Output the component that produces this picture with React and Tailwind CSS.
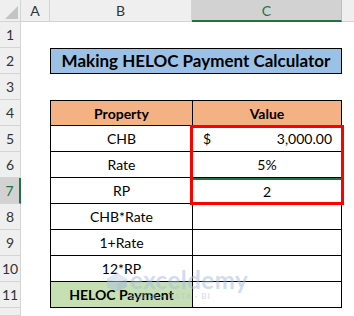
import React from 'react';

const ROW_NUMS = [1, 2, 3, 4, 5, 6, 7, 8, 9, 10, 11, 12];

function RowHeader({ n }) {
  const selected = n === 7;
  return (
    <div
      className={
        'col-start-1 flex items-center justify-center border-b border-r border-[#d4d4d4] text-[14px] ' +
        (selected
          ? 'border-r-2 border-r-[#217346] bg-[#d2d2d2] text-[#217346]'
          : 'bg-[#efefef] text-[#333]')
      }
      style={{ gridRowStart: n + 1 }}
    >
      {n < 12 ? n : null}
    </div>
  );
}

function Cell({ row, col, children, className = 'justify-center' }) {
  return (
    <div
      className={'flex items-center border-b border-black text-[14px] text-black ' + className}
      style={{ gridRowStart: row + 1, gridColumnStart: col }}
    >
      {children}
    </div>
  );
}

export default function App() {
  return (
    <div className="h-[316px] w-[354px] overflow-hidden bg-white font-['Lato',sans-serif]">
      <div className="grid h-full grid-cols-[21px_29px_142px_150px_1fr] grid-rows-[22px_repeat(11,26px)_1fr]">
        {/* corner */}
        <div className="col-start-1 row-start-1 flex items-end justify-end border-b border-r border-[#d4d4d4] bg-[#efefef] p-[2px]">
          <div className="h-0 w-0 border-b-[13px] border-l-[13px] border-b-[#c4c4c4] border-l-transparent" />
        </div>
        <div className="col-start-2 row-start-1 flex items-center justify-center border-b border-r border-[#d4d4d4] bg-[#efefef] text-[14px] text-[#333]">
          A
        </div>
        <div className="col-start-3 row-start-1 flex items-center justify-center border-b border-r border-[#d4d4d4] bg-[#efefef] text-[14px] text-[#333]">
          B
        </div>
        <div className="col-start-4 row-start-1 flex items-center justify-center border-b-2 border-r border-b-[#217346] border-r-[#bdbdbd] bg-[#d2d2d2] text-[14px] text-[#217346]">
          C
        </div>
        <div className="col-start-5 row-start-1 border-b border-[#d4d4d4] bg-[#efefef]" />

        {ROW_NUMS.map((n) => (
          <RowHeader key={n} n={n} />
        ))}

        {/* title */}
        <div className="col-start-3 col-span-2 row-start-3 flex items-center justify-center border border-black bg-[#9bc2e6] text-[17px] font-bold text-black">
          Making HELOC Payment Calculator
        </div>

        {/* table header */}
        <Cell row={4} col={3} className="justify-center border-l border-t bg-[#f4b183] font-bold">
          Property
        </Cell>
        <Cell row={4} col={4} className="justify-center border-l border-r border-t bg-[#f4b183] font-bold">
          Value
        </Cell>

        <Cell row={5} col={3} className="justify-center border-l">CHB</Cell>
        <Cell row={5} col={4} className="justify-between border-l border-r pl-[10px] pr-[9px]">
          <span>$</span>
          <span>3,000.00</span>
        </Cell>

        <Cell row={6} col={3} className="justify-center border-l">Rate</Cell>
        <Cell row={6} col={4} className="justify-center border-l border-r">5%</Cell>

        <Cell row={7} col={3} className="justify-center border-l">RP</Cell>
        <Cell row={7} col={4} className="justify-center border-l border-r">
          <div className="flex h-full w-full items-center justify-center border-t-2 border-[#217346]">2</div>
        </Cell>

        <Cell row={8} col={3} className="justify-center border-l">CHB*Rate</Cell>
        <Cell row={8} col={4} className="border-l border-r" />

        <Cell row={9} col={3} className="justify-center border-l">1+Rate</Cell>
        <Cell row={9} col={4} className="border-l border-r" />

        <Cell row={10} col={3} className="justify-center border-l">12*RP</Cell>
        <Cell row={10} col={4} className="border-l border-r" />

        <Cell row={11} col={3} className="justify-center border-l bg-[#c6e0b4] font-bold">
          HELOC Payment
        </Cell>
        <Cell row={11} col={4} className="border-l border-r" />

        {/* red highlight over C5:C7 */}
        <div className="pointer-events-none z-10 col-start-4 row-start-6 row-span-3 -mb-[1px] -ml-[2px] -mr-[2px] -mt-[1px] border-[3px] border-[#ff0000]" />

        {/* watermark */}
        <div className="pointer-events-none z-10 col-start-3 col-span-2 row-start-11 row-span-2 flex items-start pl-[56px] pt-[15px] opacity-50">
          <svg width="22" height="20" viewBox="0 0 22 20" className="mt-[1px]">
            <path d="M11 1 L21 7 L21 15 L11 19 L1 15 L1 7 Z" fill="#9fb8dc" />
            <path d="M11 1 L21 7 L11 11 L1 7 Z" fill="#c4d4ec" />
            <path d="M11 11 L11 19 L1 15 L1 7 Z" fill="#aec4e4" />
          </svg>
          <div className="ml-[2px] flex flex-col leading-none">
            <span className="text-[24px] font-bold leading-[18px] tracking-[0.5px] text-[#a3bde3]">exceldemy</span>
            <span className="mt-[3px] text-[8px] font-bold tracking-[1px] text-[#b7c6dc]">EXCEL · DATA · BI</span>
          </div>
        </div>
      </div>
    </div>
  );
}
